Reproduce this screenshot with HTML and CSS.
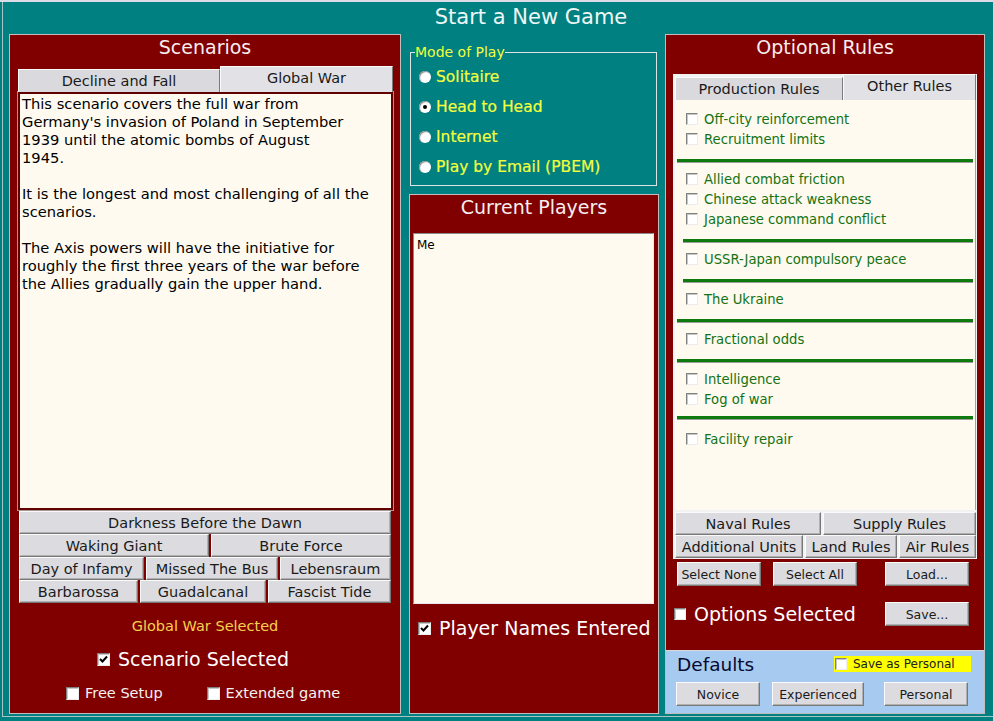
FILE: index.html
```html
<!DOCTYPE html>
<html lang="en">
<head>
    <meta charset="UTF-8">
    <meta name="viewport" content="width=device-width, initial-scale=1.0">
    <title>Start a New Game</title>
    <link rel="stylesheet" href="styles.css">
</head>
<body>
<div class="window">
    <div class="frame">
        <div class="header">Start a New Game</div>
        <div class="main">

            <!-- scenarios -->
            <section class="panel scenarios">
                <h2 class="panel-title">Scenarios</h2>
                <div class="tabs">
                    <div class="tab">Decline and Fall</div>
                    <div class="tab active">Global War</div>
                </div>
                <div class="description">
                    <p>This scenario covers the full war from<br>Germany's invasion of Poland in September<br>1939 until the atomic bombs of August<br>1945.</p>
                    <p>It is the longest and most challenging of all the<br>scenarios.</p>
                    <p>The Axis powers will have the initiative for<br>roughly the first three years of the war before<br>the Allies gradually gain the upper hand.</p>
                </div>
                <div class="scenario-buttons">
                    <div class="btn-line one"><button>Darkness Before the Dawn</button></div>
                    <div class="btn-line two"><button>Waking Giant</button><button>Brute Force</button></div>
                    <div class="btn-line three"><button>Day of Infamy</button><button>Missed The Bus</button><button>Lebensraum</button></div>
                    <div class="btn-line four"><button>Barbarossa</button><button>Guadalcanal</button><button>Fascist Tide</button></div>
                </div>
                <div class="selected-name">Global War Selected</div>
                <div class="check big scenario-check">
                    <span class="box checked"><svg width="9" height="9" viewBox="0 0 9 9"><polyline points="1,4 3.5,6.5 8,1.5" fill="none" stroke="#000" stroke-width="2"/></svg></span>
                    Scenario Selected
                </div>
                <div class="extras">
                    <div class="check small"><span class="box"></span>Free Setup</div>
                    <div class="check small"><span class="box"></span>Extended game</div>
                </div>
            </section>

            <!-- mode of play + players -->
            <div class="middle">
                <fieldset class="mode">
                    <legend>Mode of Play</legend>
                    <div class="radio"><span class="dot"></span>Solitaire</div>
                    <div class="radio"><span class="dot on"></span>Head to Head</div>
                    <div class="radio"><span class="dot"></span>Internet</div>
                    <div class="radio"><span class="dot"></span>Play by Email (PBEM)</div>
                </fieldset>
                <section class="panel players">
                    <h2 class="panel-title">Current Players</h2>
                    <div class="player-list">Me</div>
                    <div class="check big players-check">
                        <span class="box checked"><svg width="9" height="9" viewBox="0 0 9 9"><polyline points="1,4 3.5,6.5 8,1.5" fill="none" stroke="#000" stroke-width="2"/></svg></span>
                        Player Names Entered
                    </div>
                </section>
            </div>

            <!-- optional rules -->
            <section class="right">
                <div class="rules-panel">
                    <h2 class="panel-title">Optional Rules</h2>
                    <div class="tabframe">
                        <div class="tabs rule-tabs">
                            <div class="tab">Production Rules</div>
                            <div class="tab active">Other Rules</div>
                        </div>
                        <div class="rules-page">
                            <div class="rule"><span class="box"></span>Off-city reinforcement</div>
                            <div class="rule"><span class="box"></span>Recruitment limits</div>
                            <hr class="sep">
                            <div class="rule"><span class="box"></span>Allied combat friction</div>
                            <div class="rule"><span class="box"></span>Chinese attack weakness</div>
                            <div class="rule"><span class="box"></span>Japanese command conflict</div>
                            <hr class="sep indent">
                            <div class="rule"><span class="box"></span>USSR-Japan compulsory peace</div>
                            <hr class="sep indent">
                            <div class="rule"><span class="box"></span>The Ukraine</div>
                            <hr class="sep">
                            <div class="rule"><span class="box"></span>Fractional odds</div>
                            <hr class="sep">
                            <div class="rule"><span class="box"></span>Intelligence</div>
                            <div class="rule"><span class="box"></span>Fog of war</div>
                            <hr class="sep last">
                            <div class="rule"><span class="box"></span>Facility repair</div>
                        </div>
                        <div class="btn-line naval"><button>Naval Rules</button><button>Supply Rules</button></div>
                        <div class="btn-line units"><button>Additional Units</button><button>Land Rules</button><button>Air Rules</button></div>
                    </div>
                    <div class="small-row">
                        <button class="small-btn">Select None</button>
                        <button class="small-btn">Select All</button>
                        <button class="small-btn push">Load...</button>
                    </div>
                    <div class="small-row options-row">
                        <div class="check options"><span class="box"></span>Options Selected</div>
                        <button class="small-btn push">Save...</button>
                    </div>
                </div>
                <div class="defaults">
                    <div class="defaults-top">
                        <span class="defaults-title">Defaults</span>
                        <div class="save-personal"><span class="box"></span>Save as Personal</div>
                    </div>
                    <div class="defaults-buttons">
                        <button class="small-btn">Novice</button>
                        <button class="small-btn wide">Experienced</button>
                        <button class="small-btn">Personal</button>
                    </div>
                </div>
            </section>

        </div>
    </div>
</div>
</body>
</html>
```

FILE: styles.css
```css
* {
    box-sizing: border-box;
}

body {
    margin: 0;
    width: 993px;
    height: 721px;
    overflow: hidden;
    background: #008080;
    font-family: "DejaVu Sans", Verdana, sans-serif;
}

.window {
    height: 721px;
    border-top: 2px solid #dcdce6;
    padding-left: 2px;
}

.frame {
    height: 715px;
    border-left: 1px solid #a8c4c4;
    border-bottom: 1px solid #a8c4c4;
}

.header {
    height: 32px;
    line-height: 30px;
    padding-left: 66px;
    text-align: center;
    color: #eef6f6;
    font-size: 21px;
}

.main {
    display: flex;
    height: 680px;
    padding-left: 6px;
}

.panel {
    background: #800000;
    border: 1px solid #c4bcbc;
}

.panel-title {
    margin: 0;
    height: 24px;
    line-height: 24px;
    text-align: center;
    font-size: 19px;
    font-weight: normal;
    color: #f6eeee;
}

/* tabs */
.tabs {
    display: flex;
    align-items: flex-end;
    height: 26px;
}

.tab {
    height: 23px;
    line-height: 22px;
    text-align: center;
    font-size: 14.5px;
    color: #1a1a1a;
    background: #dadade;
    border-top: 1px solid #fafafa;
    border-left: 1px solid #fafafa;
    border-right: 1px solid #7a7a7a;
}

.tab.active {
    flex: 1;
    height: 26px;
    line-height: 23px;
    background: #e2e2e6;
}

button {
    font-family: inherit;
    font-size: 14.5px;
    color: #1a1a1a;
    background: #dcdce0;
    border: 1px solid;
    border-color: #fafafa #787878 #787878 #fafafa;
    box-shadow: inset -1px -1px #b0b0b0;
    padding: 0;
    height: 23px;
    cursor: pointer;
}

.btn-line {
    display: grid;
    gap: 2px;
}

.btn-line.one { grid-template-columns: 1fr; }
.btn-line.two { grid-template-columns: 190px 1fr; }
.btn-line.three { grid-template-columns: 125px 132px 1fr; }
.btn-line.four { grid-template-columns: 119px 126px 1fr; }
.btn-line.naval { grid-template-columns: 146px 1fr; margin-top: 2px; }
.btn-line.units { grid-template-columns: 128px 92px 1fr; }

/* checkboxes */
.box {
    width: 13px;
    height: 13px;
    flex: none;
    display: inline-flex;
    align-items: center;
    justify-content: center;
    background: #fff;
    border: 1px solid;
    border-color: #808080 #ececec #ececec #808080;
    box-shadow: inset 1px 1px #c8c8c8;
}

.check {
    display: flex;
    align-items: center;
    color: #fff;
}

/* scenarios */
.scenarios {
    width: 392px;
    margin-right: 8px;
}

.scenarios .tabs {
    margin: 7px 7px 0 8px;
}

.scenarios .tab {
    width: 202px;
}

.description {
    height: 418px;
    margin: 0 7px 0 8px;
    padding: 1px 2px;
    background: #fffaf0;
    border: 2px solid #600000;
    box-shadow: 0 0 0 1px #a89494;
    font-size: 14.7px;
    line-height: 18px;
    color: #000;
    white-space: nowrap;
}

.description p {
    margin: 0 0 18px;
}

.scenario-buttons {
    margin: 1px 9px 0 9px;
}

.selected-name {
    margin-top: 13px;
    line-height: 20px;
    text-align: center;
    font-size: 14.5px;
    color: #f4d24c;
}

.check.big {
    height: 24px;
    gap: 8px;
    font-size: 19px;
}

.scenario-check {
    margin-top: 11px;
    padding-left: 87px;
}

.extras {
    display: flex;
    gap: 44px;
    margin-top: 12px;
    padding-left: 56px;
}

.check.small {
    height: 20px;
    gap: 6px;
    font-size: 14.5px;
    color: #f2f2f2;
}

/* middle column */
.middle {
    width: 250px;
    margin-right: 6px;
    display: flex;
    flex-direction: column;
}

.mode {
    margin: 10px 2px 0 1px;
    padding: 2px 0 3px 0;
    border: 1px solid #dce4e4;
    min-width: 0;
}

.mode legend {
    padding: 0;
    margin-left: 4px;
    font-size: 14px;
    line-height: 16px;
    color: #f4ff3c;
}

.radio {
    display: flex;
    align-items: center;
    gap: 5px;
    height: 30px;
    padding-left: 8px;
    font-size: 15.5px;
    color: #f4ff3c;
    -webkit-text-stroke: 0.2px #f4ff3c;
}

.dot {
    position: relative;
    width: 12px;
    height: 12px;
    flex: none;
    border-radius: 50%;
    background: #fff;
    box-shadow: inset 1px 1px 1px #8a8a8a;
}

.dot.on::after {
    content: "";
    position: absolute;
    left: 4px;
    top: 4px;
    width: 4px;
    height: 4px;
    border-radius: 50%;
    background: #000;
}

.players {
    flex: 1;
    margin-top: 8px;
}

.player-list {
    height: 371px;
    margin: 14px 4px 0 3px;
    padding: 4px 3px;
    background: #fffaf0;
    border: 1px solid;
    border-color: #8a8a8a #e8e8e8 #e8e8e8 #8a8a8a;
    font-size: 12px;
    color: #000;
}

.players-check {
    margin-top: 12px;
    padding-left: 8px;
    font-size: 18.2px;
}

/* optional rules */
.right {
    width: 320px;
    display: flex;
    flex-direction: column;
    border: 1px solid #c4bcbc;
}

.rules-panel {
    flex: 1;
    background: #800000;
}

.tabframe {
    margin: 15px 7px 0 7px;
    padding: 0 1px 1px 2px;
    background: #f2f2f2;
}

.rule-tabs .tab {
    width: 168px;
}

.rules-page {
    height: 410px;
    padding-top: 9px;
    background: #fffaf0;
    border-right: 1px solid #a0a0a0;
}

.rule {
    display: flex;
    align-items: center;
    gap: 6px;
    height: 20px;
    padding-left: 11px;
    font-size: 13.2px;
    color: #137313;
}

.rule .box {
    width: 12px;
    height: 12px;
}

.sep {
    height: 3px;
    margin: 10px 2px 7px 2px;
    border: none;
    background: #0e7a0e;
    box-shadow: 0 1px #9c9c9c;
}

.sep.indent {
    margin-left: 8px;
}

.sep.last {
    margin-top: 7px;
    margin-bottom: 10px;
}

.small-row {
    display: flex;
    align-items: center;
    gap: 12px;
    margin-top: 3px;
    padding: 0 15px 0 11px;
}

.small-btn {
    width: 84px;
    height: 24px;
    font-size: 12.5px;
}

.small-btn.push {
    margin-left: auto;
}

.options-row {
    margin-top: 16px;
    padding-left: 8px;
}

.check.options {
    gap: 8px;
    font-size: 19px;
}

.check.options .box {
    width: 12px;
    height: 12px;
}

.defaults {
    height: 63px;
    padding: 1px 13px 0 10px;
    background: #a6caf0;
    border-top: 1px solid #d8d8d8;
}

.defaults-top {
    display: flex;
    align-items: center;
    justify-content: space-between;
    height: 24px;
}

.defaults-title {
    padding-left: 1px;
    font-size: 18.5px;
    color: #0a0a30;
}

.save-personal {
    display: flex;
    align-items: center;
    gap: 6px;
    width: 137px;
    height: 16px;
    padding-left: 1px;
    background: #ffff00;
    font-size: 12px;
    color: #202020;
}

.save-personal .box {
    width: 12px;
    height: 12px;
}

.defaults-buttons {
    display: flex;
    gap: 12px;
    margin-top: 6px;
}

.defaults-buttons .wide {
    width: 92px;
}

.defaults-buttons .wide + .small-btn {
    margin-left: 8px;
}
```
